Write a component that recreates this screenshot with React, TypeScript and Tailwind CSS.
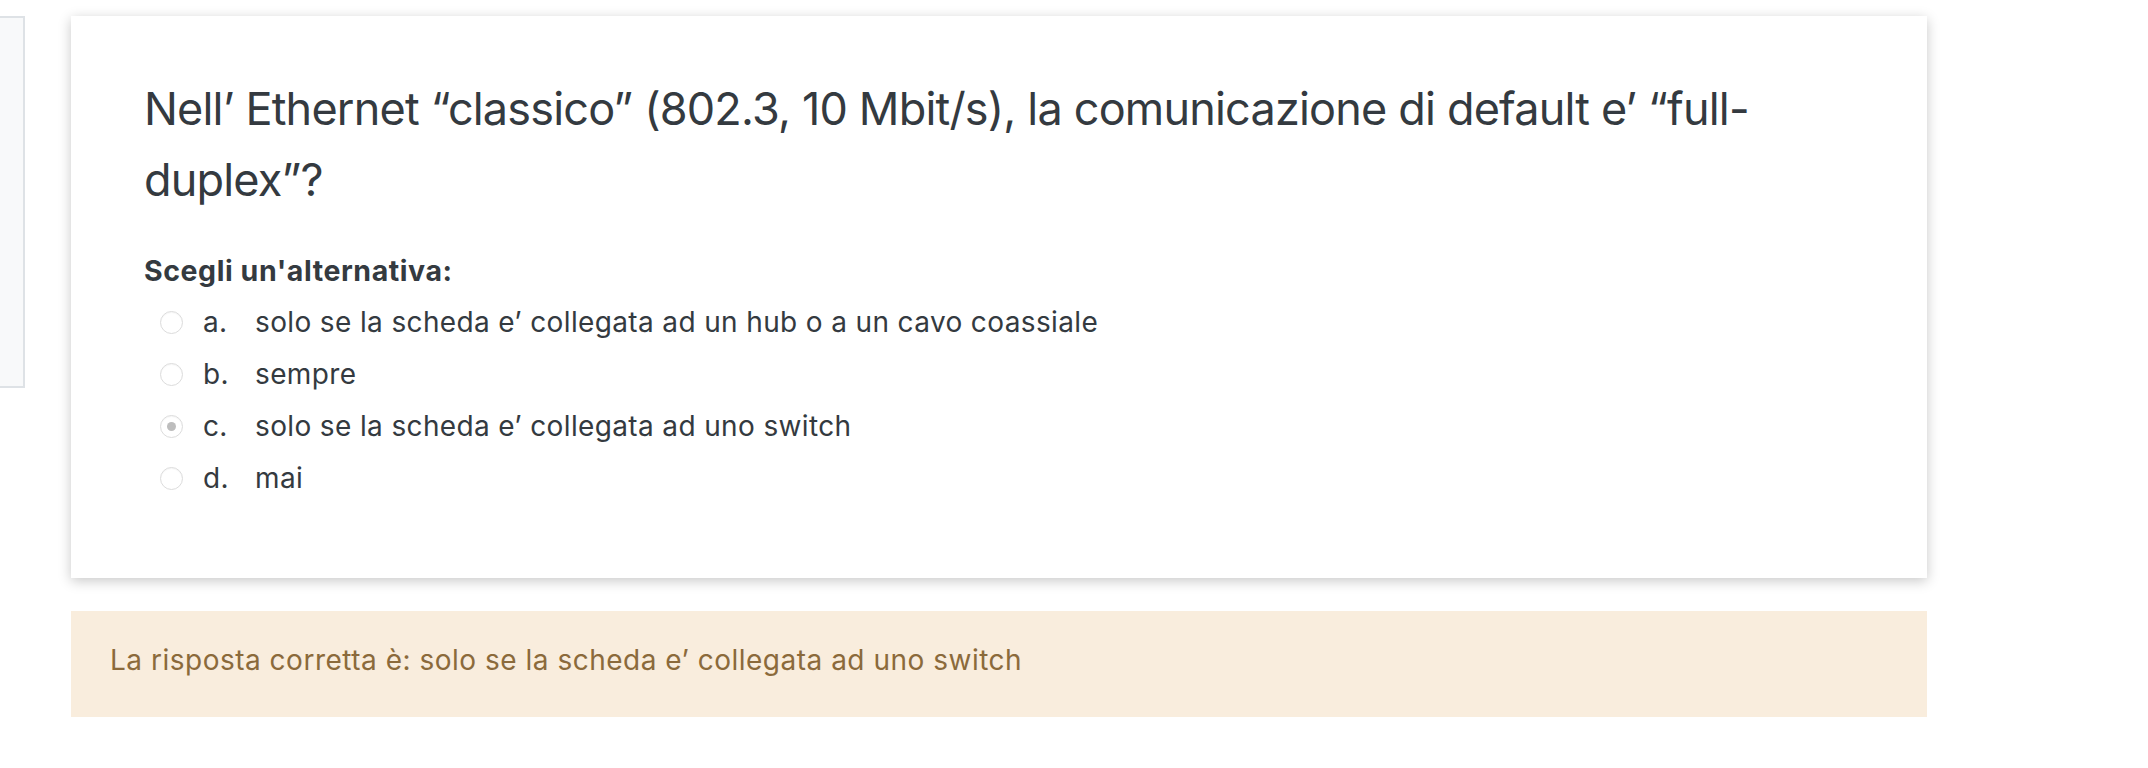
import React from 'react';

const options = [
    { letter: 'a.', text: 'solo se la scheda e\u2019 collegata ad un hub o a un cavo coassiale', checked: false },
    { letter: 'b.', text: 'sempre', checked: false },
    { letter: 'c.', text: 'solo se la scheda e\u2019 collegata ad uno switch', checked: true },
    { letter: 'd.', text: 'mai', checked: false },
];

const Radio: React.FC<{ checked: boolean }> = ({ checked }) => (
    <span className="w-[23px] h-[23px] rounded-full border border-[#dcdcdc] bg-white shadow-[inset_0_1px_1px_rgba(0,0,0,0.04)] flex items-center justify-center shrink-0">
        {checked && <span className="w-[9px] h-[9px] rounded-full bg-[#bdbdbd]" />}
    </span>
);

export default function App() {
    return (
        <div className="min-h-screen bg-white text-[#343a40] font-['Inter','Liberation_Sans',sans-serif] flex items-start">
            {/* Collapsed side block */}
            <div className="w-[25px] h-[372px] mt-4 bg-[#f8f9fa] border-2 border-l-0 border-[#dee2e6] shrink-0" />

            <div className="ml-[46px] w-[1856px] flex flex-col mt-4">
                {/* Question card */}
                <div className="bg-white shadow-[0_3px_12px_rgba(0,0,0,0.22)] pt-[57px] pb-[74px] pl-[73px] pr-[73px]">
                    <p className="text-[45px] leading-[71px] tracking-[-0.018em]">
                        Nell’ Ethernet “classico” (802.3, 10 Mbit/s), la comunicazione di default e’ “full-duplex”?
                    </p>

                    <div className="mt-[36px] text-[28.5px] leading-[40px] font-bold tracking-[0.02em]">Scegli un'alternativa:</div>

                    <div className="mt-[5px] flex flex-col">
                        {options.map((o) => (
                            <div key={o.letter} className="h-[52px] flex items-center pl-4 text-[28px] tracking-[0.013em]">
                                <Radio checked={o.checked} />
                                <span className="ml-5 w-[52px]">{o.letter}</span>
                                <span>{o.text}</span>
                            </div>
                        ))}
                    </div>
                </div>

                {/* Feedback */}
                <div className="mt-[33px] bg-[#f9eddd] text-[#8b6a3b] text-[28px] leading-[40px] tracking-[0.018em] pt-[29px] pb-[37px] pl-[39px]">
                    La risposta corretta è: solo se la scheda e’ collegata ad uno switch
                </div>
            </div>
        </div>
    );
}
